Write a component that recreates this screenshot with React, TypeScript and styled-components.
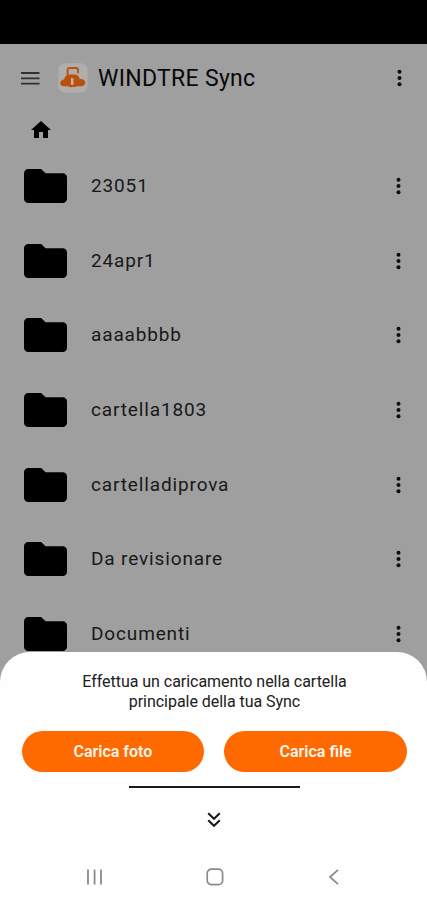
import React from "react";
import styled, { createGlobalStyle } from "styled-components";

const GlobalStyle = createGlobalStyle`
  * { box-sizing: border-box; }
  body { margin: 0; font-family: Roboto, "Liberation Sans", sans-serif; background: #9f9f9f; }
`;

const Screen = styled.main`
  position: relative;
  width: 427px;
  height: 900px;
  overflow: hidden;
  background: #9f9f9f;
  color: #080808;
`;

const StatusBar = styled.div`
  height: 44px;
  background: #000;
`;

const Header = styled.header`
  display: flex;
  align-items: center;
  height: 67px;
  padding: 0 21px 0 20px;
`;

const MenuIcon = styled.svg`
  width: 20px;
  height: 16px;
  margin-right: 18px;
`;

const LogoIcon = styled.svg`
  width: 30px;
  height: 30px;
  margin-right: 10px;
`;

const Title = styled.h1`
  flex: 1;
  margin: 0;
  padding-top: 2px;
  font-size: 23px;
  line-height: 30px;
  font-weight: 400;
  letter-spacing: 0.3px;
  white-space: nowrap;
`;

const Breadcrumb = styled.nav`
  display: flex;
  align-items: center;
  height: 38px;
  padding-left: 28.5px;
`;

const HomeIcon = styled.svg`
  width: 24px;
  height: 24px;
`;

const FolderList = styled.ul`
  margin: 0;
  padding: 0;
  list-style: none;
`;

const FolderRow = styled.li`
  display: flex;
  align-items: center;
  height: 74.6px;
  padding: 0 22px 0 24px;
`;

const FolderIcon = styled.svg`
  width: 43px;
  height: 34px;
  margin-right: 24px;
`;

const FolderName = styled.span`
  flex: 1;
  font-size: 19px;
  line-height: 24px;
  letter-spacing: 0.86px;
  color: #181818;
`;

const DotsIcon = styled.svg`
  width: 13px;
  height: 18px;
`;

const Sheet = styled.section`
  position: absolute;
  left: 0;
  right: 0;
  bottom: 0;
  height: 248.5px;
  padding-top: 20.5px;
  display: flex;
  flex-direction: column;
  align-items: center;
  background: #fefefe;
  border-radius: 30px 30px 0 0;
`;

const Message = styled.p`
  width: 290px;
  margin: 0 0 18.5px 2px;
  text-align: center;
  font-size: 16px;
  line-height: 20px;
  letter-spacing: -0.04px;
  color: #202020;
`;

const Actions = styled.div`
  display: grid;
  grid-template-columns: 1fr 1fr;
  gap: 20px;
  width: 100%;
  padding: 0 20px 0 21.5px;
`;

const ActionButton = styled.button`
  height: 41.5px;
  padding: 1px 0 0;
  border: 0;
  border-radius: 21px;
  background: #ff6a00;
  color: #fff6ec;
  font: 600 16px/20px Roboto, "Liberation Sans", sans-serif;
`;

const Divider = styled.div`
  width: 171px;
  height: 2px;
  margin: 14px 0 0 1px;
  background: #1a1a1a;
`;

const CollapseIcon = styled.svg`
  width: 14px;
  height: 16px;
  margin: 24px 0 0 1px;
`;

const SystemNav = styled.nav`
  display: flex;
  justify-content: space-between;
  width: 100%;
  margin-top: 39px;
  padding: 0 83px 0 85px;
`;

const NavIcon = styled.svg`
  width: 20px;
  height: 20px;
`;

const folders = ["23051", "24apr1", "aaaabbbb", "cartella1803", "cartelladiprova", "Da revisionare", "Documenti"];

const Dots = () => (
  <DotsIcon viewBox="0 0 13 18" fill="#0c0c0c">
    <circle cx="6.5" cy="2.7" r="2" />
    <circle cx="6.5" cy="9" r="2" />
    <circle cx="6.5" cy="15.3" r="2" />
  </DotsIcon>
);

export default function App() {
  return (
    <Screen>
      <GlobalStyle />
      <StatusBar />
      <Header>
        <MenuIcon viewBox="0 0 20 16" stroke="#303030" strokeWidth="1.8">
          <path d="M1 3h18.5M1 8.3h18.5M1 13.6h18.5" />
        </MenuIcon>
        <LogoIcon viewBox="0 0 30 30">
          <rect x=".3" y=".3" width="29.4" height="29.4" rx="7" fill="#b0aeac" />
          <path d="M9.6 13V7.2Q9.6 5 11.8 5h6Q20 5 20 7.2v3" fill="none" stroke="#b9510c" strokeWidth="1.8" />
          <path d="M5.8 23.3C3.8 23.3 2.2 22 2.2 20c0-2 1.6-3.4 3.9-3.6.8-2.8 2.7-4.8 5.6-4.8h4.6c3 0 4.8 1.6 5.4 4.6 3.2-.6 5.5 1 5.5 3.6 0 2.1-1.6 3.5-4.1 3.5H19q-2.2 1.2-4.3.5-2.4.9-4.5-.5z" fill="#b9510c" />
          <path d="M13 17.2a1.4 1.4 0 1 1 2.3 0l.4 4.6h-2.8z" fill="#c7b4a5" />
        </LogoIcon>
        <Title>WINDTRE Sync</Title>
        <Dots />
      </Header>
      <Breadcrumb>
        <HomeIcon viewBox="0 0 24 24">
          <path d="M10 20v-6h4v6h5v-8h3L12 3 2 12h3v8z" fill="#000" />
        </HomeIcon>
      </Breadcrumb>
      <FolderList>
        {folders.map((name) => (
          <FolderRow key={name}>
            <FolderIcon viewBox="2 4 20 16" preserveAspectRatio="none">
              <path d="M10 4H4c-1.1 0-1.99.9-1.99 2L2 18c0 1.1.9 2 2 2h16c1.1 0 2-.9 2-2V8c0-1.1-.9-2-2-2h-8z" fill="#000" />
            </FolderIcon>
            <FolderName>{name}</FolderName>
            <Dots />
          </FolderRow>
        ))}
      </FolderList>
      <Sheet>
        <Message>Effettua un caricamento nella cartella principale della tua Sync</Message>
        <Actions>
          <ActionButton>Carica foto</ActionButton>
          <ActionButton>Carica file</ActionButton>
        </Actions>
        <Divider />
        <CollapseIcon viewBox="0 0 14 16" fill="none" stroke="#181818" strokeWidth="2">
          <path d="M1.2 1.2 7 6.8l5.8-5.6M1.2 8.2 7 13.8l5.8-5.6" />
        </CollapseIcon>
        <SystemNav>
          <NavIcon viewBox="0 0 20 20" stroke="#8b8b8b" strokeWidth="1.8">
            <path d="M3 2.5v15M9.6 2.5v15M16 2.5v15" />
          </NavIcon>
          <NavIcon viewBox="0 0 20 20" fill="none" stroke="#8b8b8b" strokeWidth="1.7">
            <rect x="2.2" y="2.2" width="15.4" height="15.4" rx="4.2" />
          </NavIcon>
          <NavIcon viewBox="0 0 20 20" fill="none" stroke="#8b8b8b" strokeWidth="1.8">
            <path d="M14 2.8 6 10l8 7.2" />
          </NavIcon>
        </SystemNav>
      </Sheet>
    </Screen>
  );
}
